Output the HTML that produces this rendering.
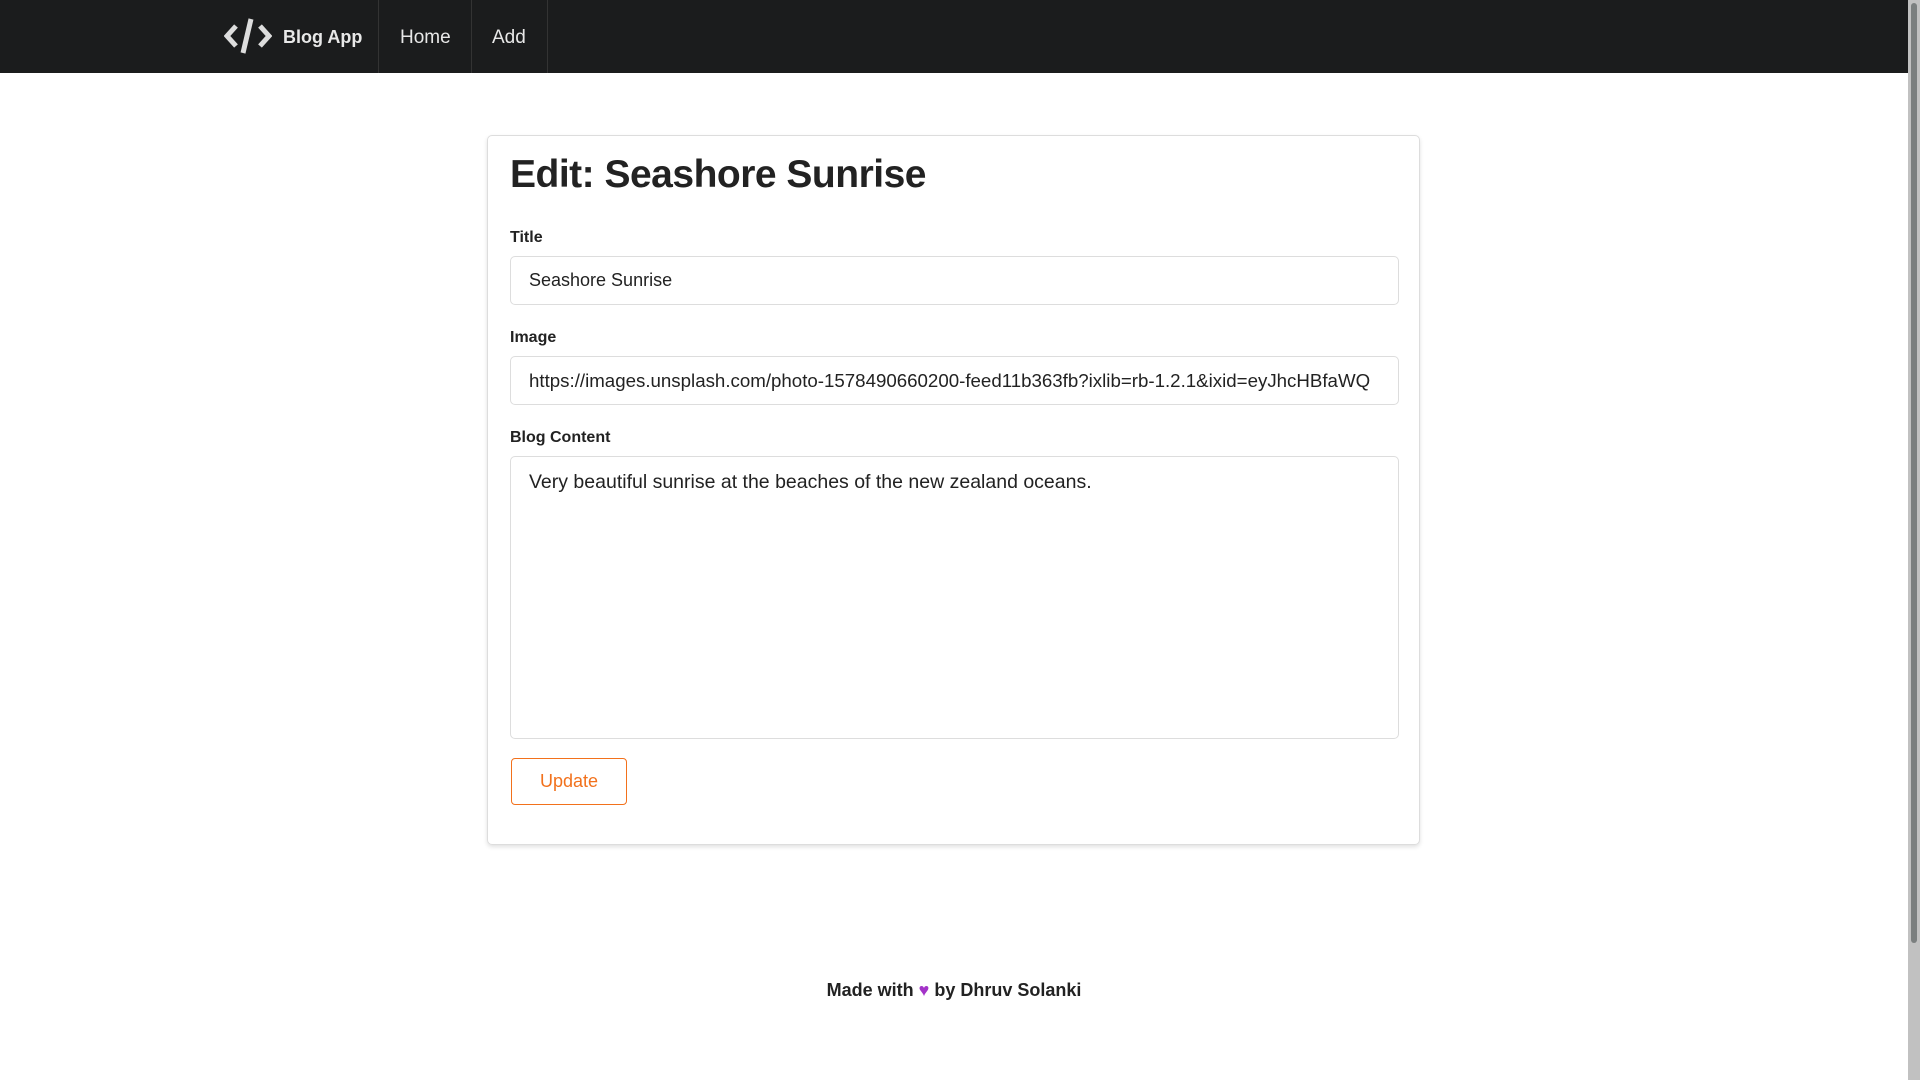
<!DOCTYPE html>
<html><head><meta charset="utf-8"><style>
*{box-sizing:border-box;margin:0;padding:0}
html,body{width:1920px;height:1080px;overflow:hidden;background:#fff;font-family:"Liberation Sans",sans-serif;color:#222}
.nav{position:absolute;left:0;top:0;width:1908px;height:73px;background:#1b1c1d}
.sep{position:absolute;top:0;width:1px;height:73px;background:#333}
.nt{position:absolute;top:1px;line-height:73px;color:#e8e8e8;font-size:19px}
.sb{position:absolute;left:1908px;top:0;width:12px;height:1080px;background:#c1c1c1}
.th{position:absolute;left:3px;top:3px;width:6px;height:940px;background:#7b7f7f;border-radius:3px}
.card{position:absolute;left:487px;top:135px;width:933px;height:710px;border:1px solid #ddd;border-radius:5px;box-shadow:0 2px 4px rgba(0,0,0,.12)}
h1{position:absolute;left:22px;top:17px;font-size:39px;font-weight:bold;color:#222;letter-spacing:-.5px}
.lbl{position:absolute;left:22px;font-size:16px;font-weight:bold;color:#222}
.in{position:absolute;left:22px;width:889px;border:1px solid #ddd;border-radius:5px;font-size:18px;color:#222;padding-left:18px;white-space:nowrap;overflow:hidden}
.btn{position:absolute;left:23px;top:622px;width:116px;height:47px;border:1.5px solid #f2711c;border-radius:4px;color:#f2711c;font-size:18px;text-align:center;line-height:45px}
.foot{position:absolute;left:0;width:1908px;top:980px;text-align:center;font-size:18px;font-weight:bold;color:#222}
</style></head><body>
<div class="nav">
<svg style="position:absolute;left:224px;top:17px" width="48" height="38" viewBox="0 0 48 38"><path d="M12 9 L3 19 L12 29" stroke="#ddd" stroke-width="5" fill="none"/><path d="M36 9 L45 19 L36 29" stroke="#ddd" stroke-width="5" fill="none"/><path d="M27 2 L19 36" stroke="#ddd" stroke-width="5"/></svg>
<div class="nt" style="left:283px;font-weight:bold;font-size:18px">Blog App</div>
<div class="sep" style="left:378px"></div>
<div class="nt" style="left:400px">Home</div>
<div class="sep" style="left:471px"></div>
<div class="nt" style="left:492px">Add</div>
<div class="sep" style="left:547px"></div>
</div>
<div class="card">
<h1>Edit: Seashore Sunrise</h1>
<div class="lbl" style="top:93px">Title</div>
<div class="in" style="top:120px;height:49px;line-height:47px">Seashore Sunrise</div>
<div class="lbl" style="top:193px">Image</div>
<div class="in" style="top:220px;height:49px;line-height:47px;font-size:18.7px">https://images.unsplash.com/photo-1578490660200-feed11b363fb?ixlib=rb-1.2.1&amp;ixid=eyJhcHBfaWQ</div>
<div class="lbl" style="top:293px">Blog Content</div>
<div class="in" style="top:320px;height:283px;padding-top:14px;line-height:22px;font-size:19.5px">Very beautiful sunrise at the beaches of the new zealand oceans.</div>
<div class="btn">Update</div>
</div>
<div class="foot">Made with <span style="color:#a333c8">♥</span> by Dhruv Solanki</div>
<div class="sb"><div class="th"></div></div>
</body></html>
